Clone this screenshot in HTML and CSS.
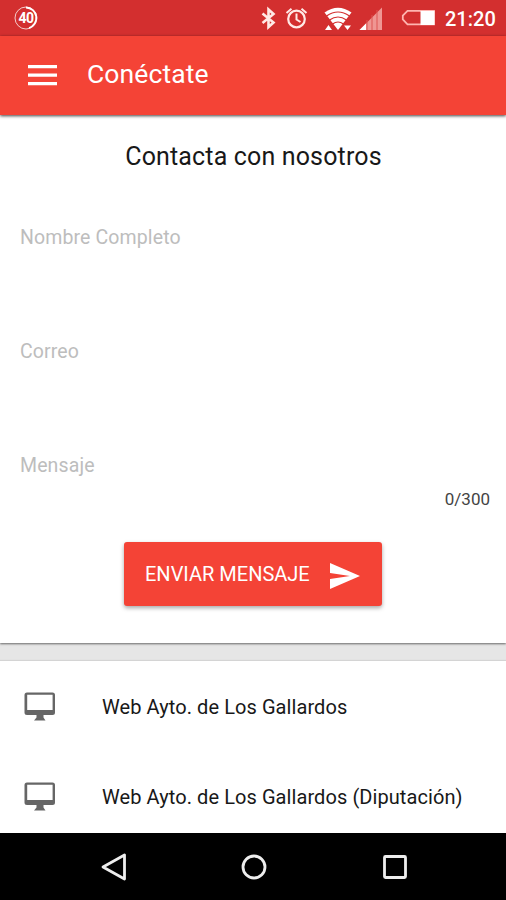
FILE: index.html
```html
<!DOCTYPE html>
<html lang="es">
<head>
<meta charset="utf-8">
<title>Conéctate</title>
<link rel="stylesheet" href="styles.css">
</head>
<body>
<div class="screen">
  <div class="status">
    <span class="badge">
      <svg width="24" height="24" viewBox="0 0 24 24" fill="none" stroke="#fff"><circle cx="12" cy="12" r="11" stroke-width="1" opacity=".75"/><path d="M12 1.500A10.500 10.500 0 0 1 15 22" stroke-width="1.800"/></svg>
      <span class="badge-text">40</span>
    </span>
    <svg class="status-icons" width="176" height="36" viewBox="260 0 176 36" fill="none" stroke="#ffe9e6">
      <path d="M262.500 13.500L273.500 22.500L268.500 27V9.500L273.500 14L262.500 23" stroke-width="2.600"/>
      <circle cx="296.500" cy="19" r="8.300" stroke-width="2.200"/>
      <path d="M296.500 13.500V19.500L300.500 22M286.500 13L291.500 8.800M301.500 8.800L306.500 13" stroke-width="2"/>
      <path d="M324.500 12.500Q338 3 351.500 12.500L338 30Z" fill="#fff" stroke="none"/>
      <path d="M326.500 16Q338 8 349.500 16M329.500 20Q338 14 346.500 20M332.500 24Q338 20 343.500 24" stroke="#d32f2f" stroke-width="1.200"/>
      <path d="M325 30L328.500 25L332 30ZM344 25.500H351L347.500 30Z" fill="#fff" stroke="none"/>
      <path d="M359.500 30L382 7.500V30Z" fill="#ef9693" stroke="none"/>
      <path d="M359.500 30L366 23.500V30Z" fill="#fff" stroke="none"/>
      <path d="M367 20V30M372 15V30M377 10V30" stroke="#dc5552" stroke-width="1"/>
      <path d="M434 10.800H407.500L402.800 15.500V19.500L407.500 24.300H434Z" stroke="#ffb5b0" stroke-width="1.800"/>
      <path d="M420.500 11H434.500V25H420.500Z" fill="#fff" stroke="none"/>
    </svg>
    <span class="clock">21:20</span>
  </div>
  <header class="appbar">
    <svg width="29" height="23" viewBox="0 0 29 23" fill="#fff"><path d="M0 1H29V4.300H0ZM0 9.500H29V12.800H0ZM0 18H29V21.300H0Z"/></svg>
    <h1 class="title">Conéctate</h1>
  </header>
  <main class="content">
    <section class="card">
      <h2 class="heading">Contacta con nosotros</h2>
      <div class="field">Nombre Completo</div>
      <div class="field">Correo</div>
      <div class="field last">Mensaje</div>
      <div class="counter">0/300</div>
      <div class="button">
        <span class="label">ENVIAR MENSAJE</span>
        <svg class="send" width="30" height="26" viewBox="0 0 30 26" fill="#fff"><path d="M0 0L30 13L0 26V16L20 13L0 10Z"/></svg>
      </div>
    </section>
    <section class="links">
      <div class="row">
        <svg class="monitor" width="32" height="30" viewBox="0 0 32 30"><path fill="#666" fill-rule="evenodd" d="M3 .5H28.500A2.500 2.500 0 0 1 31 3V20.500A2.500 2.500 0 0 1 28.500 23H19.500V25.500L21.500 28.500H10L12.500 25.500V23H3A2.500 2.500 0 0 1 .5 20.500V3A2.500 2.500 0 0 1 3 .5ZM3.200 2.800V18H28.600V2.800Z"/></svg>
        <span class="name">Web Ayto. de Los Gallardos</span>
      </div>
      <div class="row">
        <svg class="monitor" width="32" height="30" viewBox="0 0 32 30"><path fill="#666" fill-rule="evenodd" d="M3 .5H28.500A2.500 2.500 0 0 1 31 3V20.500A2.500 2.500 0 0 1 28.500 23H19.500V25.500L21.500 28.500H10L12.500 25.500V23H3A2.500 2.500 0 0 1 .5 20.500V3A2.500 2.500 0 0 1 3 .5ZM3.200 2.800V18H28.600V2.800Z"/></svg>
        <span class="name">Web Ayto. de Los Gallardos (Diputación)</span>
      </div>
    </section>
  </main>
  <nav class="navbar">
    <svg width="28" height="28" viewBox="0 0 28 28"><path d="M24.500 2V26L3 14Z"/></svg>
    <svg width="28" height="28" viewBox="0 0 28 28"><circle cx="14" cy="14" r="11"/></svg>
    <svg width="28" height="28" viewBox="0 0 28 28"><rect x="3.500" y="3.500" width="21" height="21" rx="1"/></svg>
  </nav>
</div>
</body>
</html>
```
FILE: styles.css
```css
* { box-sizing: border-box; }
body { margin: 0; font-family: Roboto, "Liberation Sans", sans-serif; color: #181818; }
svg { display: block; flex: none; }
h1, h2 { margin: 0; font-weight: 400; }
.screen { width: 506px; height: 900px; display: flex; flex-direction: column; overflow: hidden; background: #e6e6e6; }
.status { height: 36px; flex: none; display: flex; align-items: center; background: #d32f2f; color: #fff; padding-left: 14px; }
.badge { display: grid; place-items: center; }
.badge > * { grid-area: 1 / 1; }
.badge-text { font-size: 14px; font-weight: 700; line-height: 24px; letter-spacing: -.5px; }
.status-icons { margin-left: 222px; }
.clock { margin-left: 9px; font-size: 20px; font-weight: 500; line-height: 36px; padding-top: 2px; }
.appbar { height: 79px; flex: none; display: flex; align-items: center; gap: 30px; padding: 0 0 0 28px; background: #f44336; color: #fff; box-shadow: 0 1px 3px rgba(0, 0, 0, .75); z-index: 1; }
.title { font-size: 26.5px; line-height: 32px; letter-spacing: .1px; padding-bottom: 3px; }
.content { flex: none; height: 718px; display: flex; flex-direction: column; gap: 18px; }
.card { height: 528px; flex: none; background: #fff; padding-top: 26px; display: flex; flex-direction: column; box-shadow: 0 1px 2px rgba(0, 0, 0, .55); }
.heading { font-size: 25px; line-height: 32px; letter-spacing: .15px; text-align: center; padding-left: 1px; }
.field { height: 114px; padding: 53px 20px 0; font-size: 19.5px; line-height: 24px; letter-spacing: .12px; color: #bdbdbd; }
.last { height: 88px; }
.counter { align-self: flex-end; margin-right: 16px; font-size: 17px; line-height: 20px; color: #444; }
.button { align-self: center; width: 258px; height: 64px; margin-top: 33px; padding: 0 22px 0 21px; display: flex; align-items: center; justify-content: space-between; border-radius: 3px; background: #f44336; color: #fff; box-shadow: 0 2px 4px rgba(0, 0, 0, .35); }
.label { font-size: 20px; line-height: 24px; }
.send { margin-top: 3px; }
.links { flex: 1; background: #fff; box-shadow: 0 -1px 1px rgba(0, 0, 0, .08); }
.row { height: 90px; display: flex; align-items: center; padding-left: 24px; gap: 46px; }
.monitor { margin-top: 1px; }
.name { font-size: 20px; line-height: 24px; letter-spacing: .08px; padding-top: 2px; }
.navbar { flex: 1; z-index: 1; background: #000; display: flex; align-items: center; justify-content: center; gap: 112.5px; padding-left: 2px; }
.navbar svg { fill: none; stroke: #eee; stroke-width: 2.800; stroke-linejoin: round; }
```
